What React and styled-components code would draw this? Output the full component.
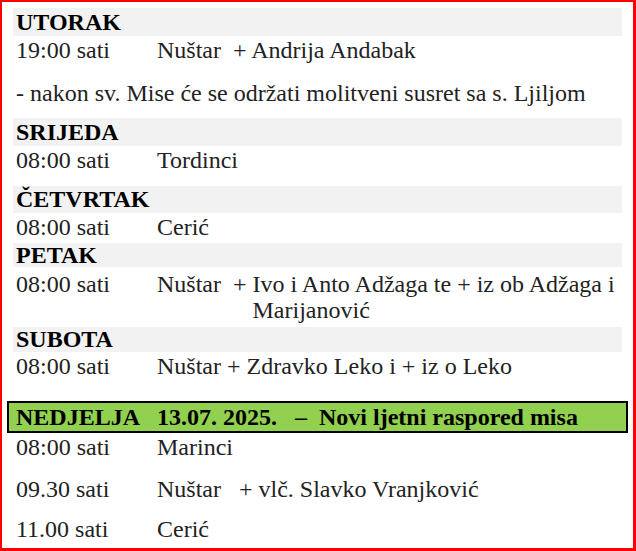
import styled, { createGlobalStyle } from "styled-components";

const GlobalStyle = createGlobalStyle`
  html, body {
    margin: 0;
    padding: 0;
    background: #ffffff;
  }
`;

const Page = styled.div`
  width: 636px;
  height: 551px;
  box-sizing: border-box;
  border: 2px solid #ff0000;
  border-right-width: 3px;
  border-bottom-width: 3px;
  padding: 6px 11px 0 11px;
  font-family: "Liberation Serif", "Times New Roman", serif;
  font-size: 24px;
  color: #222222;
  overflow: hidden;
`;

const DayBand = styled.div`
  height: ${(p) => p.$h || 28}px;
  line-height: ${(p) => p.$h || 28}px;
  margin-top: ${(p) => p.$mt || 0}px;
  padding-left: 3px;
  background: #f2f2f2;
  font-weight: 700;
  color: #000000;
  white-space: nowrap;
`;

const Row = styled.div`
  display: grid;
  grid-template-columns: 141px 1fr;
  padding-left: 3px;
  line-height: ${(p) => p.$lh || 28}px;
  margin-top: ${(p) => p.$mt || 0}px;
`;

const Time = styled.span`
  white-space: nowrap;
`;

const Place = styled.span`
  display: flex;
  white-space: pre-wrap;
`;

const Lead = styled.span`
  flex: none;
  white-space: pre;
`;

const Note = styled.p`
  margin: 15px 0 0;
  padding-left: 3px;
  line-height: 28px;
`;

const SundayBar = styled.div`
  display: grid;
  grid-template-columns: 141px 1fr;
  margin: 21px -6px 0;
  padding-left: 7px;
  height: 28px;
  line-height: 28px;
  border: 2px solid #000000;
  background: #92d050;
  font-weight: 700;
  color: #000000;
  white-space: pre;
`;

const App = () => {
  return (
    <>
      <GlobalStyle />
      <Page>
        <DayBand>UTORAK</DayBand>
        <Row>
          <Time>19:00 sati</Time>
          <Place>Nuštar  + Andrija Andabak</Place>
        </Row>
        <Note>- nakon sv. Mise će se održati molitveni susret sa s. Ljiljom</Note>

        <DayBand $mt={11}>SRIJEDA</DayBand>
        <Row>
          <Time>08:00 sati</Time>
          <Place>Tordinci</Place>
        </Row>

        <DayBand $mt={12} $h={27}>ČETVRTAK</DayBand>
        <Row>
          <Time>08:00 sati</Time>
          <Place>Cerić</Place>
        </Row>

        <DayBand $mt={2} $h={24}>PETAK</DayBand>
        <Row $mt={4} $lh={26}>
          <Time>08:00 sati</Time>
          <Place>
            <Lead>Nuštar  + </Lead>
            <span>Ivo i Anto Adžaga te + iz ob Adžaga i Marijanović</span>
          </Place>
        </Row>

        <DayBand $mt={4} $h={25}>SUBOTA</DayBand>
        <Row>
          <Time>08:00 sati</Time>
          <Place>Nuštar + Zdravko Leko i + iz o Leko</Place>
        </Row>

        <SundayBar>
          <span>NEDJELJA</span>
          <span>13.07. 2025.   –  Novi ljetni raspored misa</span>
        </SundayBar>
        <Row>
          <Time>08:00 sati</Time>
          <Place>Marinci</Place>
        </Row>
        <Row $mt={14}>
          <Time>09.30 sati</Time>
          <Place>Nuštar   + vlč. Slavko Vranjković</Place>
        </Row>
        <Row $mt={12}>
          <Time>11.00 sati</Time>
          <Place>Cerić</Place>
        </Row>
      </Page>
    </>
  );
};

export default App;
